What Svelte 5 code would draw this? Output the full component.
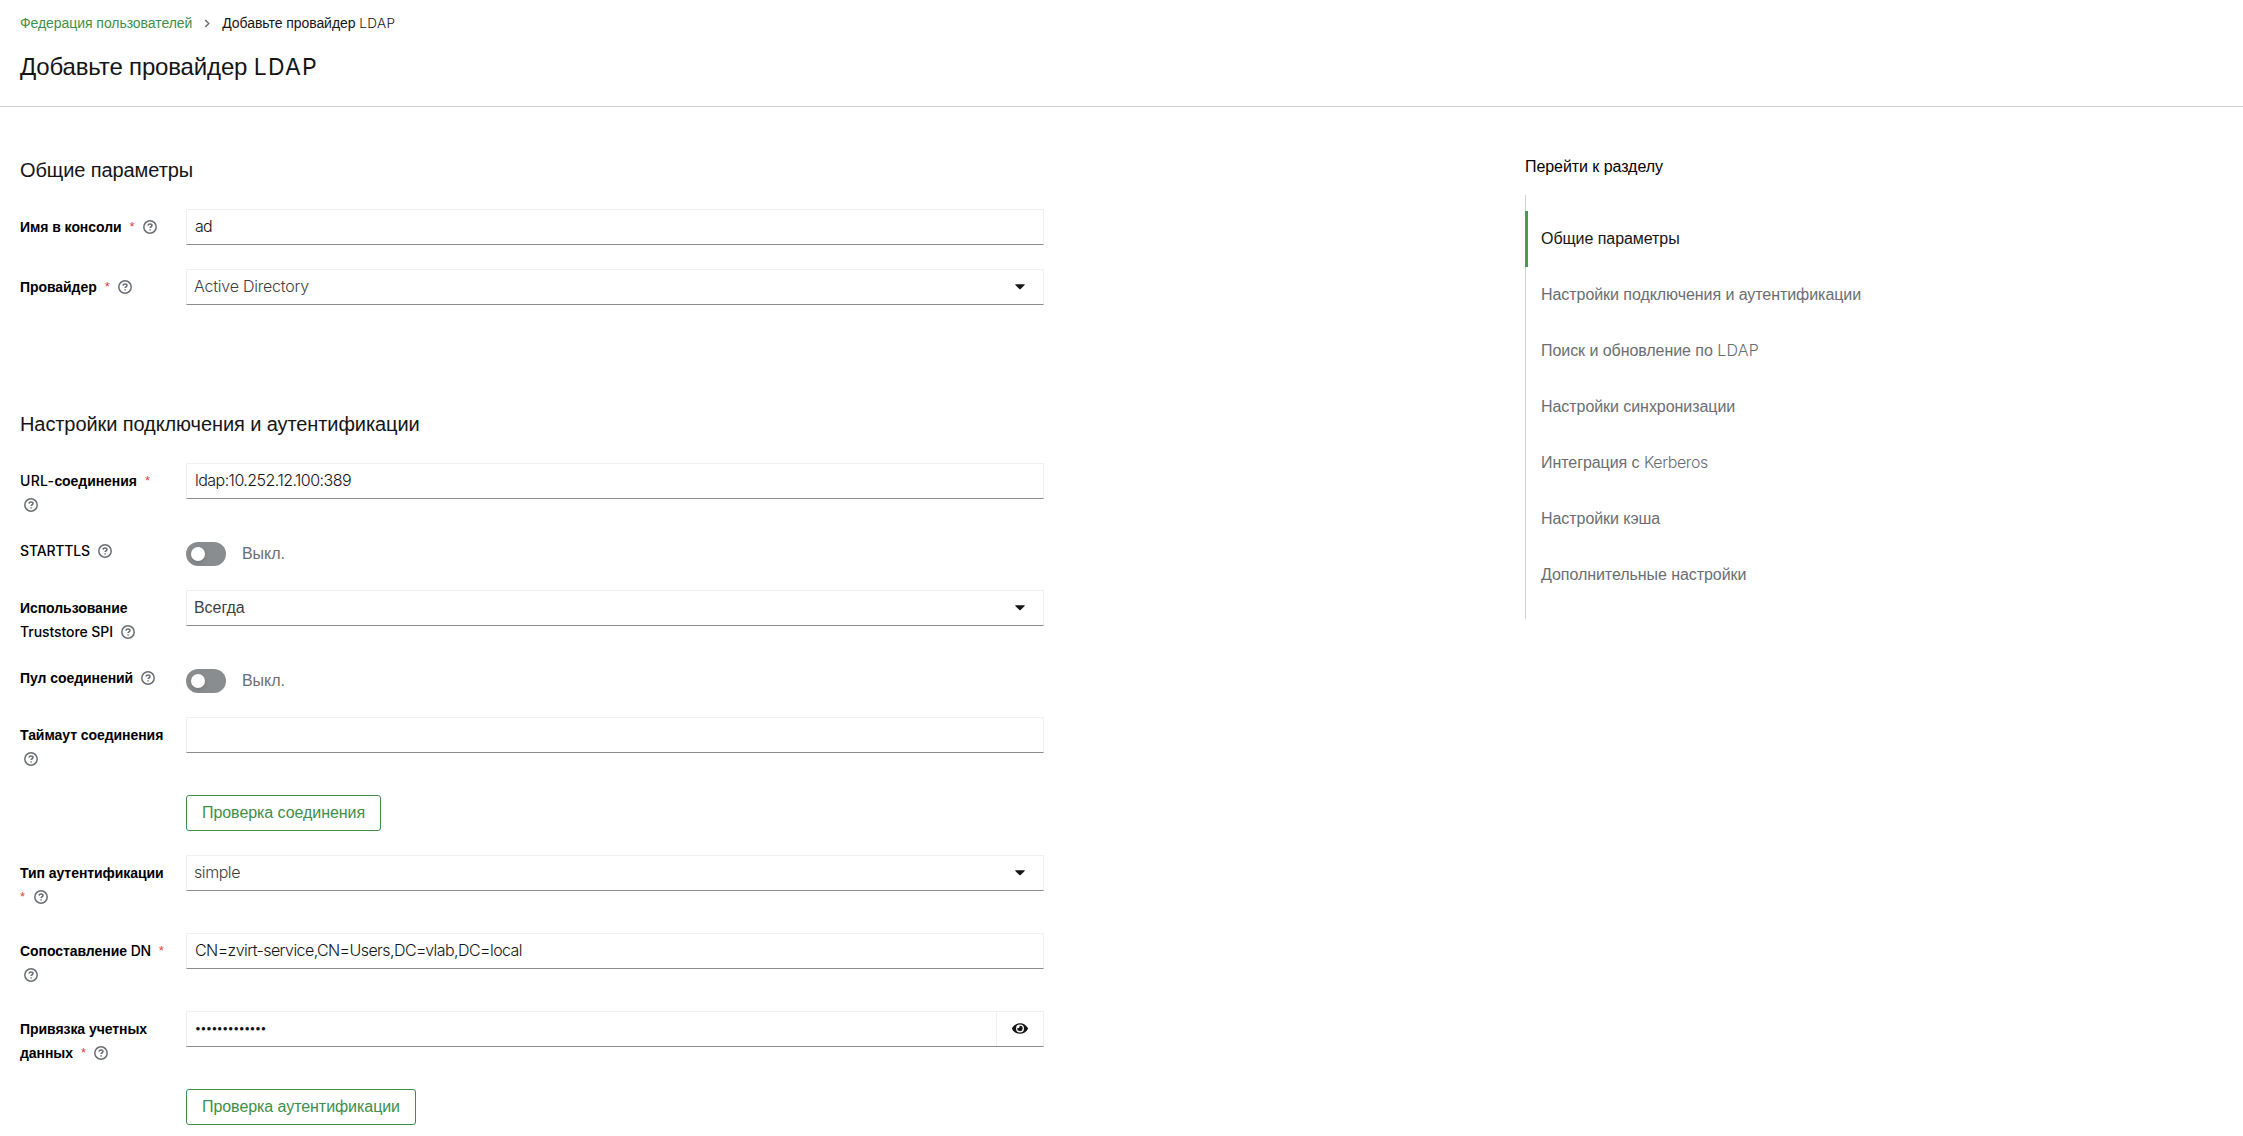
<script>
  const heading = [{ t: 'Добавьте провайдер ' }, { t: 'LDAP', w: 64 }];

  // Each label is a list of lines; a run with a width `w` is Latin text.
  const general = [
    { h: 36, kind: 'input', value: 'ad', w: 17, lines: [[{ t: 'Имя в консоли' }, 'req', 'help']] },
    { h: 36, kind: 'select', value: 'Active Directory', w: 115, lines: [[{ t: 'Провайдер' }, 'req', 'help']] },
  ];
  const connection = [
    { h: 55, kind: 'input', value: 'ldap:10.252.12.100:389', w: 156, lines: [[{ t: 'URL-', w: 34 }, { t: 'соединения' }, 'req'], ['help']] },
    { h: 24, kind: 'switch', value: 'Выкл.', lines: [[{ t: 'STARTTLS', w: 70 }, 'help']] },
    { h: 55, kind: 'select', value: 'Всегда', lines: [[{ t: 'Использование' }], [{ t: 'Truststore SPI', w: 93 }, 'help']] },
    { h: 24, kind: 'switch', value: 'Выкл.', lines: [[{ t: 'Пул соединений' }, 'help']] },
    { h: 54, kind: 'input', value: '', lines: [[{ t: 'Таймаут соединения' }], ['help']] },
    { h: 36, kind: 'button', value: 'Проверка соединения', lines: [] },
    { h: 54, kind: 'select', value: 'simple', w: 46, lines: [[{ t: 'Тип аутентификации' }], ['req-start', 'help']] },
    { h: 54, kind: 'input', value: 'CN=zvirt-service,CN=Users,DC=vlab,DC=local', w: 327, lines: [[{ t: 'Сопоставление ' }, { t: 'DN', w: 20 }, 'req'], ['help']] },
    { h: 54, kind: 'password', value: '•••••••••••••', w: 71, lines: [[{ t: 'Привязка учетных' }], [{ t: 'данных' }, 'req', 'help']] },
    { h: 36, kind: 'button', value: 'Проверка аутентификации', lines: [] },
  ];
  const sections = [
    { title: 'Общие параметры', rows: general },
    { title: 'Настройки подключения и аутентификации', rows: connection },
  ];
  const links = [
    [{ t: 'Общие параметры' }],
    [{ t: 'Настройки подключения и аутентификации' }],
    [{ t: 'Поиск и обновление по ' }, { t: 'LDAP', w: 42 }],
    [{ t: 'Настройки синхронизации' }],
    [{ t: 'Интеграция с ' }, { t: 'Kerberos', w: 64 }],
    [{ t: 'Настройки кэша' }],
    [{ t: 'Дополнительные настройки' }],
  ];

  // Spreads letter spacing so that a Latin run takes up its nominal width.
  function fit(node, w) {
    node.style.letterSpacing = '0px';
    const now = node.getBoundingClientRect().width;
    node.style.letterSpacing = (w - now) / node.textContent.length + 'px';
  }
</script>

{#snippet run(p)}{#if p.w}<span class="latin" use:fit={p.w}>{p.t}</span>{:else}{p.t}{/if}{/snippet}

{#snippet help()}
  <svg class="help" viewBox="0 0 14 14"><circle cx="7" cy="7" r="6.2" /><path d="M5 5.600C5.100 4.500 5.900 4 7 4c1.100 0 2 .6 2 1.600C9 6.800 7.100 6.700 7.100 8.100" /><path d="M7.100 9.200v1.400" /></svg>
{/snippet}

<div class="page">
  <header>
    <nav class="crumbs">
      <a href="#top">Федерация пользователей</a>
      <svg viewBox="0 0 6 10"><path d="M1 1l4 4-4 4" /></svg>
      <span>Добавьте провайдер {@render run({ t: 'LDAP', w: 36 })}</span>
    </nav>
    <h1>{#each heading as p}{@render run(p)}{/each}</h1>
  </header>

  <main>
    <div class="form">
      {#each sections as s}
        <section>
          <h2>{s.title}</h2>
          <div class="rows">
            {#each s.rows as r}
              <div class="row {r.kind}" style:height="{r.h}px">
                <div class="label">
                  {#each r.lines as line}
                    <div class="line">
                      {#each line as p}
                        {#if p === 'req'}<span class="req">*</span>
                        {:else if p === 'req-start'}<span class="req start">*</span>
                        {:else if p === 'help'}{@render help()}
                        {:else}<span class="text">{@render run(p)}</span>{/if}
                      {/each}
                    </div>
                  {/each}
                </div>
                {#if r.kind === 'switch'}
                  <div class="toggle"><span class="track"><i></i></span><span>{r.value}</span></div>
                {:else if r.kind === 'button'}
                  <button>{r.value}</button>
                {:else}
                  <div class="control">
                    <span class="value">{@render run({ t: r.value, w: r.w })}</span>
                    {#if r.kind === 'select'}
                      <svg class="caret" viewBox="0 0 10 6"><path d="M.6.3h8.800q.7.2.2.8L5.600 5q-.6.500-1.200 0L.4 1.100Q-.1.500.6.3z" /></svg>
                    {:else if r.kind === 'password'}
                      <span class="reveal">
                        <svg viewBox="0 0 576 512"><path d="M572.52 241.400C518.290 135.590 410.930 64 288 64S57.680 135.640 3.480 241.410a32.350 32.350 0 0 0 0 29.190C57.710 376.410 165.070 448 288 448s230.320-71.640 284.520-177.410a32.350 32.350 0 0 0 0-29.190zM288 400a144 144 0 1 1 144-144 143.930 143.930 0 0 1-144 144zm0-240a95.310 95.310 0 0 0-25.310 3.790 47.850 47.850 0 0 1-66.900 66.900A95.780 95.780 0 1 0 288 160z" /></svg>
                      </span>
                    {/if}
                  </div>
                {/if}
              </div>
            {/each}
          </div>
        </section>
      {/each}
    </div>

    <aside>
      <div class="jump">Перейти к разделу</div>
      <ul>
        {#each links as l, i}
          <li class:current={i === 0}>{#each l as p}{@render run(p)}{/each}</li>
        {/each}
      </ul>
    </aside>
  </main>
</div>

<style>
  :global(body) { background: #fff; overflow: hidden; }
  .page { width: 2243px; height: 1136px; overflow: hidden; box-sizing: border-box; font: 16px/24px "Liberation Sans", Arial, sans-serif; letter-spacing: -.06px; color: #151515; }
  .latin { font-family: Inter, sans-serif; font-weight: 300; white-space: pre; line-height: 0; }
  header { height: 107px; box-sizing: border-box; border-bottom: 1px solid #d2d2d2; padding: 12px 20px 0; }
  .crumbs { display: flex; align-items: center; height: 22px; font-size: 14px; line-height: 22px; }
  .crumbs a { color: #3e8f4a; text-decoration: none; }
  .crumbs svg { width: 6px; height: 9px; margin: 0 12px; fill: none; stroke: #6a6e73; stroke-width: 1.6; }
  .crumbs .latin { font-size: 13.500px; }
  h1 { margin: 17px 0 0; font-size: 24px; line-height: 32px; font-weight: 400; letter-spacing: -.16px; }
  h1 .latin { font-weight: 400; font-size: 23px; }
  main { display: flex; }
  .form { width: 1024px; padding-left: 20px; }
  section:first-child { padding-top: 50px; height: 254px; box-sizing: border-box; }
  h2 { margin: 0 0 26px; font-size: 20px; line-height: 26px; font-weight: 400; letter-spacing: -.09px; }
  section + section { padding-top: 50px; }
  .rows { display: flex; flex-direction: column; gap: 24px; }
  .row { display: grid; grid-template-columns: 166px 858px; align-items: start; }
  .label { padding-top: 6px; font-size: 14px; font-weight: 700; color: #000; letter-spacing: -.06px; }
  .line { display: flex; align-items: center; height: 24px; }
  .text { white-space: pre; }
  .label .latin { font-weight: 500; }
  .switch .label { padding-top: 0; margin-top: -3px; }
  .req { margin-left: 8px; color: #d4493f; font-weight: 400; font-size: 13px; }
  .req.start { margin-left: 0; }
  .help { width: 14px; height: 14px; margin-left: 8px; fill: none; stroke: #6a6e73; stroke-width: 1.5; }
  .start + .help { margin-left: 9px; }
  .help:first-child { margin-left: 4px; }
  .control { display: flex; align-items: center; height: 36px; box-sizing: border-box; border: 1px solid #f0f0f0; border-bottom-color: #8a8d90; padding-left: 8px; }
  .select .control { padding-left: 7px; }
  .value { flex: 1; }
  .select .value { color: #3c3f42; }
  .caret { width: 10px; height: 6px; margin-right: 18px; fill: #151515; }
  .reveal { display: flex; align-items: center; justify-content: center; width: 46px; height: 34px; border-left: 1px solid #f0f0f0; }
  .reveal svg { width: 16px; height: 15px; margin-bottom: 2px; fill: #151515; }
  .password .value .latin { font-size: 11px; font-weight: 500; position: relative; top: -2px; }
  .toggle { display: flex; align-items: center; gap: 16px; color: #6a6e73; }
  .track { width: 40px; height: 24px; border-radius: 12px; background: #8a8d90; display: flex; align-items: center; padding-left: 5px; box-sizing: border-box; }
  .track i { width: 14px; height: 14px; border-radius: 50%; background: #fff; box-shadow: 0 2px 4px rgba(0, 0, 0, .15); }
  button { justify-self: start; grid-column: 2; height: 36px; box-sizing: border-box; padding: 0 15px; border: 1px solid #3e8f4a; border-radius: 3px; background: #fff; color: #3e8f4a; font: inherit; letter-spacing: inherit; }
  aside { margin-left: 481px; padding-top: 48px; }
  .jump { height: 24px; color: #000; }
  ul { margin: 16px 0 0; padding: 16px 0; list-style: none; border-left: 1px solid #d2d2d2; }
  li { height: 56px; line-height: 56px; padding-left: 15px; color: #6a6e73; white-space: pre; }
  li.current { color: #151515; margin-left: -1px; padding-left: 13px; border-left: 3px solid #4a9852; }
</style>
